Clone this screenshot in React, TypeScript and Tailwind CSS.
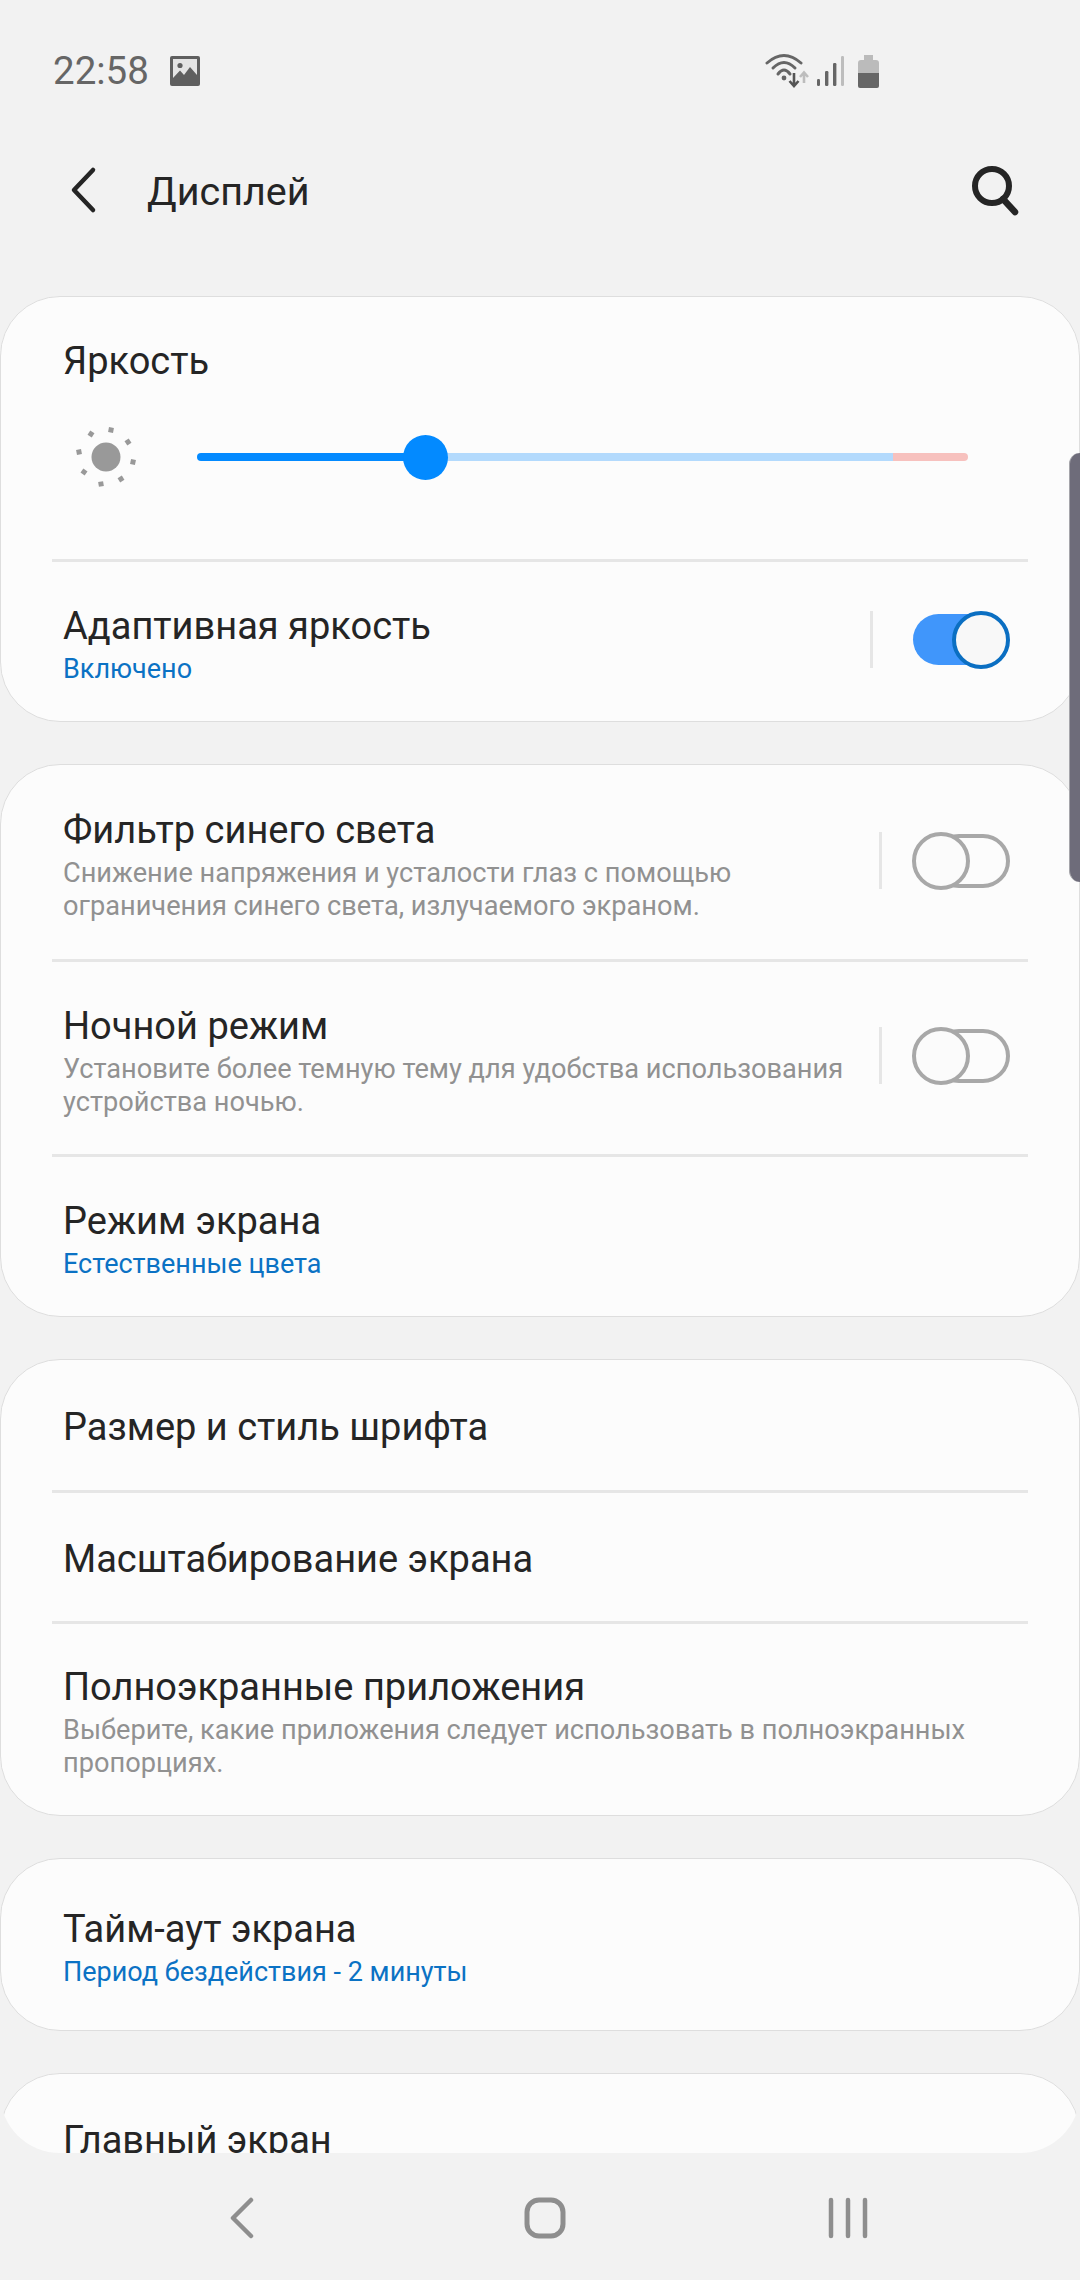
import React from "react";

const font = { fontFamily: "Roboto, 'Noto Sans', sans-serif" };

function Divider() {
  return <div className="h-[3px] mx-[51px] bg-[#e6e6e6]" />;
}

function Toggle({ on, extra }: { on: boolean; extra: string }) {
  return (
    <div className={`flex items-center ${extra}`}>
      <div className={`w-[3px] h-[57px] bg-[#e6e6e6] ${on ? "mr-[40px]" : "mr-[30px]"}`} />
      {on ? (
        <div className="relative w-[97px] h-[58px]">
          <div className="absolute left-0 top-[3px] w-[80px] h-[51px] rounded-full bg-[#4096fb]" />
          <div className="absolute right-0 top-0 w-[58px] h-[58px] rounded-full border-[4px] border-[#0b6fc2] bg-[#f8f8f8]" />
        </div>
      ) : (
        <div className="relative w-[98px] h-[58px]">
          <div className="absolute left-[20px] top-[2px] right-0 h-[54px] rounded-full border-[4px] border-[#a8a8a8]" />
          <div className="absolute left-0 top-0 w-[58px] h-[58px] rounded-full border-[4px] border-[#a8a8a8] bg-[#fbfbfb]" />
        </div>
      )}
    </div>
  );
}

function Row({
  title,
  sub,
  blue,
  h,
  toggle,
}: {
  title: string;
  sub?: React.ReactNode;
  blue?: boolean;
  h: string;
  toggle?: React.ReactNode;
}) {
  return (
    <div className={`flex items-center justify-between pl-[62px] pr-[69px] ${h}`}>
      <div className="flex flex-col pt-[4px]">
        <div className="text-[38px] leading-[48px] text-[#252525]">{title}</div>
        {sub && (
          <div
            className={`mt-[3px] leading-[33px] ${blue ? "text-[27px] text-[#0b72c4]" : "text-[27.2px] text-[#919191]"}`}
          >
            {sub}
          </div>
        )}
      </div>
      {toggle}
    </div>
  );
}

function Card({ children, extra = "" }: { children: React.ReactNode; extra?: string }) {
  return (
    <div className={`bg-[#fcfcfc] border border-[#dedede] rounded-[60px] ${extra}`}>{children}</div>
  );
}

function Sun() {
  const dots = [
    [110, 430],
    [90, 434],
    [127, 442],
    [78, 452],
    [132, 462],
    [83, 472],
    [120, 479],
    [100, 484],
  ];
  return (
    <svg width="64" height="64" viewBox="73 425 64 64" className="shrink-0">
      <circle cx="105" cy="457" r="14.5" fill="#999" />
      {dots.map(([x, y], i) => (
        <rect
          key={i}
          x={x - 2.5}
          y={y - 2.5}
          width="5"
          height="5"
          fill="#999"
          transform={`rotate(${i * 23 + 10} ${x} ${y})`}
        />
      ))}
    </svg>
  );
}

function Slider() {
  return (
    <div className="relative h-[45px] w-[771px] flex items-center">
      <div className="h-[8px] w-[229px] bg-[#038aff] rounded-l-full" />
      <div className="h-[8px] w-[467px] bg-[#b3dafd]" />
      <div className="h-[8px] w-[75px] bg-[#f7c1be] rounded-r-full" />
      <div className="absolute left-[206px] top-0 w-[45px] h-[45px] rounded-full bg-[#038aff]" />
    </div>
  );
}

function StatusIcons() {
  return (
    <svg width="120" height="40" viewBox="760 50 120 40" className="shrink-0">
      <g fill="none" stroke="#666" strokeWidth="3" strokeLinecap="round">
        <path d="M767 62 Q784 47 801 62" />
        <path d="M773 67 Q784 56 795 67" />
        <path d="M778 73 Q784 65 790 73" />
      </g>
      <circle cx="784" cy="77" r="2.4" fill="#666" />
      <path d="M794 72 V84 M789.5 80 L794 85 L798.5 80" fill="none" stroke="#555" strokeWidth="2.6" />
      <path d="M804 82 V72 M800 76 L804 71.5 L808 76" fill="none" stroke="#bdbdbd" strokeWidth="2.6" />
      <rect x="817" y="78" width="3" height="7" rx="1.2" fill="#666" />
      <rect x="825" y="70" width="3.4" height="15" rx="1.2" fill="#666" />
      <rect x="833" y="62" width="3.4" height="23" rx="1.2" fill="#666" />
      <rect x="841" y="55" width="3" height="30" rx="1.2" fill="#bdbdbd" />
      <path d="M864 54 h9 v5 h3 q3 0 3 3 v11 h-21 v-11 q0 -3 3 -3 h3 z" fill="#bbb" />
      <path d="M858 72 h21 v13 q0 2 -2 2 h-17 q-2 0 -2 -2 z" fill="#666" />
    </svg>
  );
}

export default function App() {
  return (
    <div
      className="relative w-[1080px] h-[2280px] bg-[#f2f2f2] overflow-hidden flex flex-col"
      style={font}
    >
      <div className="h-[142px] shrink-0 flex items-center pl-[53px]">
        <span className="text-[38.5px] text-[#666] w-[117px]">22:58</span>
        <svg width="30" height="30" viewBox="0 0 30 30" className="shrink-0">
          <rect width="30" height="30" rx="2" fill="#5f5f5f" />
          <rect x="3" y="3" width="24" height="24" fill="#e4e4e4" />
          <circle cx="10" cy="9.5" r="2.6" fill="#5f5f5f" />
          <path d="M3 27 V22 L10 14.5 L14 19 L20 11 L27 19 V27 Z" fill="#5f5f5f" />
        </svg>
        <div className="ml-[560px]">
          <StatusIcons />
        </div>
      </div>

      <div className="h-[96px] shrink-0 flex items-center pl-[66px] pr-[59px]">
        <svg width="32" height="50" viewBox="0 0 32 50" className="shrink-0">
          <path d="M27 5 L8 25 L27 45" fill="none" stroke="#252525" strokeWidth="4.5" strokeLinecap="round" strokeLinejoin="round" />
        </svg>
        <div className="ml-[49px] mt-[3px] text-[39.5px] text-[#252525] flex-1">Дисплей</div>
        <svg width="52" height="52" viewBox="0 0 52 52" className="shrink-0">
          <circle cx="23" cy="22" r="17" fill="none" stroke="#252525" strokeWidth="6" />
          <path d="M34 35 L46 48" fill="none" stroke="#252525" strokeWidth="6.5" strokeLinecap="round" />
        </svg>
      </div>

      <div className="mt-[58px] h-[1857px] shrink-0 overflow-hidden rounded-b-[60px] flex flex-col gap-[42px]">
        <Card>
          <div className="h-[262px] flex flex-col">
            <div className="text-[38px] leading-[48px] text-[#252525] pl-[62px] mt-[40px]">Яркость</div>
            <div className="flex items-center pl-[73px] mt-[40px]">
              <Sun />
              <div className="ml-[59px]">
                <Slider />
              </div>
            </div>
          </div>
          <Divider />
          <Row
            h="h-[159px]"
            title="Адаптивная яркость"
            sub="Включено"
            blue
            toggle={<Toggle on extra="mb-[4px]" />}
          />
        </Card>

        <Card>
          <Row
            h="h-[194px]"
            title="Фильтр синего света"
            sub={
              <>
                Снижение напряжения и усталости глаз с помощью
                <br />
                ограничения синего света, излучаемого экраном.
              </>
            }
            toggle={<Toggle on={false} extra="mb-[3px]" />}
          />
          <Divider />
          <Row
            h="h-[192px]"
            title="Ночной режим"
            sub={
              <>
                Установите более темную тему для удобства использования
                <br />
                устройства ночью.
              </>
            }
            toggle={<Toggle on={false} extra="mb-[5px]" />}
          />
          <Divider />
          <Row h="h-[159px]" title="Режим экрана" sub="Естественные цвета" blue />
        </Card>

        <Card>
          <Row h="h-[130px]" title="Размер и стиль шрифта" />
          <Divider />
          <Row h="h-[128px]" title="Масштабирование экрана" />
          <Divider />
          <Row
            h="h-[191px]"
            title="Полноэкранные приложения"
            sub={
              <>
                Выберите, какие приложения следует использовать в полноэкранных
                <br />
                пропорциях.
              </>
            }
          />
        </Card>

        <Card>
          <Row h="h-[171px]" title="Тайм-аут экрана" sub="Период бездействия - 2 минуты" blue />
        </Card>

        <Card extra="shrink-0">
          <div className="h-[171px] pl-[62px] pt-[42px] text-[38px] leading-[48px] text-[#252525]">
            Главный экран
          </div>
        </Card>
      </div>

      <div className="flex-1 flex items-start pl-[220px] pt-[44px] gap-[259px]">
        <svg width="44" height="42" viewBox="0 0 44 42">
          <path d="M31 3 L13 21 L31 39" fill="none" stroke="#8e8e8e" strokeWidth="4.5" strokeLinecap="round" strokeLinejoin="round" />
        </svg>
        <svg width="44" height="42" viewBox="0 0 44 42">
          <rect x="4" y="3" width="36" height="36" rx="12" fill="none" stroke="#8e8e8e" strokeWidth="5" />
        </svg>
        <svg width="44" height="42" viewBox="0 0 44 42">
          <path d="M5 3 V39 M22 3 V39 M39 3 V39" fill="none" stroke="#8e8e8e" strokeWidth="4.5" strokeLinecap="round" />
        </svg>
      </div>

      <div className="absolute right-0 top-[453px] w-[11px] h-[429px] bg-[#6e6c7a] rounded-l-[12px] border-l border-[#a5a5aa]" />
    </div>
  );
}
